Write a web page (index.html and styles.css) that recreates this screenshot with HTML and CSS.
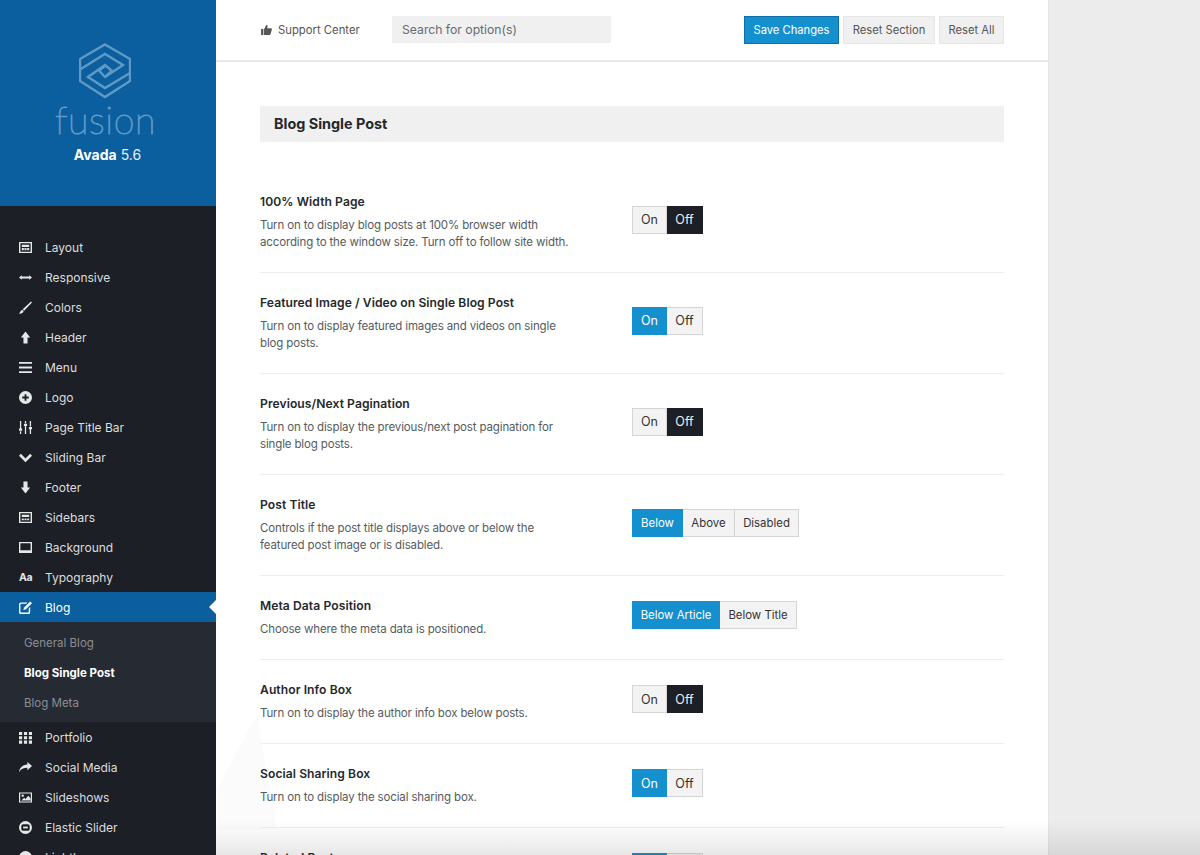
FILE: index.html
```html
<!DOCTYPE html>
<html lang="en">
<head>
<meta charset="utf-8">
<title>Avada Options</title>
<link rel="stylesheet" href="styles.css">
</head>
<body>
<div class="app">
  <aside class="sidebar">
    <div class="brand">
      <svg class="brand-mark" viewBox="0 0 52 56" width="52" height="56" fill="none" stroke="#5f9ac6" stroke-width="2.4">
        <path d="M26 1.500 L51 16 V38 L26 54 L1 38 V16 Z"/>
        <path d="M1 26.500 L26 11 L44 22 L26 34 L20 27.500 L26 23"/>
        <path d="M51 30 L26 45 L9 34 L26 22 L32.700 27.500 L26 34"/>
      </svg>
      <div class="brand-word">fusion</div>
      <div class="brand-version"><b>Avada</b> 5.6</div>
    </div>
    <nav class="menu">
      <a class="item"><svg class="ico" viewBox="0 0 14 14"><path fill-rule="evenodd" d="M0 1h14v12H0zM1.500 2.500v9h11v-9z"/><path d="M3 4h8v2.500H3zM3 7.500h2.200V10H3zM5.900 7.500h2.200V10H5.900zM8.800 7.500H11V10H8.800z"/></svg>Layout</a>
      <a class="item"><svg class="ico" viewBox="0 0 14 14"><path d="M0 7l3-2.500V6h8V4.500L14 7l-3 2.500V8H3v1.500z"/></svg>Responsive</a>
      <a class="item"><svg class="ico" viewBox="0 0 14 14"><path d="M13 .5l1 1L5.500 10.500l-1.500-1.500zM3.500 9.500l1.500 1.500C4.500 13 2 14 0 13.500c1.500-1 1.500-3.500 3.500-4z"/></svg>Colors</a>
      <a class="item"><svg class="ico" viewBox="0 0 14 14"><path d="M7 .5l5 6.500H9.200v6.500H4.800V7H2z"/></svg>Header</a>
      <a class="item"><svg class="ico" viewBox="0 0 14 14"><path d="M0 1h14v2H0zM0 6h14v2H0zM0 11h14v2H0z"/></svg>Menu</a>
      <a class="item"><svg class="ico" viewBox="0 0 14 14"><path fill-rule="evenodd" d="M7 0a7 7 0 100 14A7 7 0 007 0zM6 3.500h2V6h2.500v2H8v2.500H6V8H3.500V6H6z"/></svg>Logo</a>
      <a class="item"><svg class="ico" viewBox="0 0 14 14"><path d="M1 0h1.400v8H1zM1 11h1.400v3H1zM0 8h3.400v2.500H0zM6.300 0h1.400v2.500H6.300zM6.300 5.500h1.400V14H6.300zM5.300 3h3.400v2.500H5.300zM11.600 0H13v6h-1.400zM11.600 9H13v5h-1.400zM10.600 6.500H14V9h-3.400z"/></svg>Page Title Bar</a>
      <a class="item"><svg class="ico" viewBox="0 0 14 14"><path d="M2 3l5 5 5-5 2 2-7 7-7-7z"/></svg>Sliding Bar</a>
      <a class="item"><svg class="ico" viewBox="0 0 14 14"><path d="M4.800 .5h4.400V7H12l-5 6.500L2 7h2.800z"/></svg>Footer</a>
      <a class="item"><svg class="ico" viewBox="0 0 14 14"><path fill-rule="evenodd" d="M0 1h14v12H0zM1.500 2.500v9h11v-9z"/><path d="M3 4h8v2.500H3zM3 8h2.200v2H3zM5.900 8h2.200v2H5.900zM8.800 8H11v2H8.800z"/></svg>Sidebars</a>
      <a class="item"><svg class="ico" viewBox="0 0 14 14"><path fill-rule="evenodd" d="M0 1h14v12H0zM1.500 2.500v7.500h11V2.500z"/></svg>Background</a>
      <a class="item"><span class="ico-text">Aa</span>Typography</a>
      <a class="item active"><svg class="ico" viewBox="0 0 14 14"><path fill-rule="evenodd" d="M2 1.500h7L7.800 3H2.500a1 1 0 00-1 1v7.500a1 1 0 001 1h7a1 1 0 001-1V8L12 6.500V12a2 2 0 01-2 2H2a2 2 0 01-2-2V3.500a2 2 0 012-2z"/><path d="M12 .5l2 2-6.500 6.500-2.800.8.800-2.800z"/></svg>Blog</a>
      <div class="submenu">
        <a class="sub">General Blog</a>
        <a class="sub current">Blog Single Post</a>
        <a class="sub">Blog Meta</a>
      </div>
      <a class="item"><svg class="ico" viewBox="0 0 14 14"><path d="M0 1h3.400v3.400H0zM5.300 1h3.400v3.400H5.300zM10.600 1H14v3.400h-3.400zM0 5.600h3.400V9H0zM5.300 5.600h3.400V9H5.300zM10.600 5.600H14V9h-3.400zM0 10.200h3.400v3.400H0zM5.300 10.200h3.400v3.400H5.300zM10.600 10.200H14v3.400h-3.400z"/></svg>Portfolio</a>
      <a class="item"><svg class="ico" viewBox="0 0 14 14"><path d="M9 1l5 4.500L9 10V7.300C5 7.300 2 8.500 0 12 .5 7.500 3.500 4 9 3.700z"/></svg>Social Media</a>
      <a class="item"><svg class="ico" viewBox="0 0 14 14"><path fill-rule="evenodd" d="M0 1.500h14v11H0zM1.300 2.800v8.400h11.400V2.800z"/><circle cx="4" cy="5" r="1.300"/><path d="M2.500 10.200l3-3 1.500 1.500 3-3.500 2.500 3v2z"/></svg>Slideshows</a>
      <a class="item"><svg class="ico" viewBox="0 0 14 14"><path fill-rule="evenodd" d="M7 0a7 7 0 100 14A7 7 0 007 0zM4.500 3.500h5a2 2 0 012 2v3a2 2 0 01-2 2h-5a2 2 0 01-2-2v-3a2 2 0 012-2z"/><path d="M4.500 6h5v2h-5z"/></svg>Elastic Slider</a>
      <a class="item"><svg class="ico" viewBox="0 0 14 14"><circle cx="7" cy="7" r="7"/></svg>Lightbox</a>
    </nav>
  </aside>

  <main class="main">
    <header class="topbar">
      <a class="support"><svg class="thumb" viewBox="0 0 12 11"><path d="M0 4.500h2.500V11H0zM3.300 4.800L5.800 0c1.200 0 1.600 1 1.300 2L6.700 3.700H11c1 0 1.200.9.800 1.500L10.500 10c-.2.600-.6 1-1.300 1H3.300z"/></svg>Support Center</a>
      <div class="search">Search for option(s)</div>
      <div class="actions">
        <button class="btn primary w-save">Save Changes</button>
        <button class="btn w-section">Reset Section</button>
        <button class="btn w-all">Reset All</button>
      </div>
    </header>
    <section class="content">
      <h1 class="section-title">Blog Single Post</h1>
      <div class="option">
        <div class="info"><h2>100% Width Page</h2><p>Turn on to display blog posts at 100% browser width according to the window size. Turn off to follow site width.</p></div>
        <div class="seg"><span class="on-w">On</span><span class="dark off-w">Off</span></div>
      </div>
      <div class="option">
        <div class="info"><h2>Featured Image / Video on Single Blog Post</h2><p>Turn on to display featured images and videos on single blog posts.</p></div>
        <div class="seg"><span class="blue on-w">On</span><span class="off-w">Off</span></div>
      </div>
      <div class="option">
        <div class="info"><h2>Previous/Next Pagination</h2><p>Turn on to display the previous/next post pagination for single blog posts.</p></div>
        <div class="seg"><span class="on-w">On</span><span class="dark off-w">Off</span></div>
      </div>
      <div class="option">
        <div class="info"><h2>Post Title</h2><p>Controls if the post title displays above or below the featured post image or is disabled.</p></div>
        <div class="seg"><span class="blue w-below">Below</span><span class="w-above">Above</span><span class="w-disabled">Disabled</span></div>
      </div>
      <div class="option">
        <div class="info"><h2>Meta Data Position</h2><p>Choose where the meta data is positioned.</p></div>
        <div class="seg"><span class="blue w-article">Below Article</span><span class="w-title">Below Title</span></div>
      </div>
      <div class="option">
        <div class="info"><h2>Author Info Box</h2><p>Turn on to display the author info box below posts.</p></div>
        <div class="seg"><span class="on-w">On</span><span class="dark off-w">Off</span></div>
      </div>
      <div class="option">
        <div class="info"><h2>Social Sharing Box</h2><p>Turn on to display the social sharing box.</p></div>
        <div class="seg"><span class="blue on-w">On</span><span class="off-w">Off</span></div>
      </div>
      <div class="option">
        <div class="info"><h2>Related Posts</h2><p>Turn on to display related posts.</p></div>
        <div class="seg"><span class="blue on-w">On</span><span class="off-w">Off</span></div>
      </div>
    </section>
  </main>
  <div class="gutter"></div>
  <div class="fade"></div>
</div>
</body>
</html>
```
FILE: styles.css
```css
* { box-sizing: border-box; }
html, body { margin: 0; height: 855px; overflow: hidden; }
body { font-family: Inter, Roboto, "Liberation Sans", sans-serif; background: #ececec; }
.app { display: flex; height: 855px; overflow: hidden; position: relative; }

.sidebar { width: 216px; flex: none; background: #1c1f25; height: 855px; overflow: hidden; }
.brand { height: 206px; background: #0b5f9e; display: flex; flex-direction: column; align-items: center; padding-top: 43px; }
.brand-mark { display: block; margin-right: 6px; }
.brand-word { color: #5f9ac6; font-family: Lato, Roboto, sans-serif; font-weight: 100; -webkit-text-stroke: 1.1px #5f9ac6; font-size: 37.500px; line-height: 38px; margin: 2px 5px 0 0; letter-spacing: .6px; height: 41px; }
.brand-version { color: #e4edf4; font-size: 14px; line-height: 18px; margin: 4px 1px 0 0; }
.brand-version b { color: #fff; font-weight: 700; }

.menu { padding-top: 26px; }
.item { display: flex; align-items: center; height: 30px; padding-left: 19px; color: #dcddde; font-size: 12px; position: relative; }
.ico { width: 13px; height: 13px; fill: #e6e7e8; margin-right: 13px; flex: none; }
.ico-text { width: 13px; margin-right: 13px; font-size: 10.500px; font-weight: 700; color: #e6e7e8; flex: none; letter-spacing: -.3px; }
.item.active { background: #0b5f9e; color: #fff; }
.item.active .ico { fill: #fff; }
.item.active::after { content: ""; position: absolute; right: 0; top: 8px; border: 7px solid transparent; border-right-color: #fff; border-left-width: 0; }
.submenu { background: #262a33; padding: 5px 0; }
.sub { display: flex; align-items: center; height: 30px; padding: 1px 0 0 24px; color: #8b8e93; font-size: 11.500px; }
.sub.current { color: #fff; font-weight: 700; }

.main { width: 832px; flex: none; background: #fff; height: 855px; overflow: hidden; position: relative; }
.main::before { content: ""; position: absolute; left: 1px; top: 715px; width: 60px; height: 115px; background: #fbfbfb; clip-path: polygon(66% 0, 0 65%, 0 100%, 100% 100%); }
.topbar { height: 62px; border-bottom: 2px solid #eaeaea; display: flex; align-items: center; padding: 0 44px; }
.support { display: flex; align-items: center; width: 132px; flex: none; color: #555; font-size: 11.300px; padding-left: 1px; }
.thumb { width: 11px; height: 10px; fill: #555; margin-right: 6px; }
.search { width: 218.500px; height: 27px; margin-bottom: 1px; background: #f1f0f0; color: #666b70; font-size: 12.200px; line-height: 27px; padding-left: 10px; }
.actions { margin-left: auto; display: flex; gap: 4px; }
.btn { height: 28px; border: 1px solid #e6e6e6; background: #f1f0f0; color: #555; font: 11.200px Inter, Roboto, "Liberation Sans", sans-serif; padding: 0; }
.btn.primary { background: #1590ce; border-color: #0f6fa6; color: #fff; }
.w-save { width: 95px; }
.w-section { width: 92px; }
.w-all { width: 65px; }

.content { padding: 44px 44px 0; position: relative; }
.section-title { margin: 0 0 30px; height: 36px; line-height: 36px; background: #f1f0f0; color: #23282d; font-size: 14.400px; font-weight: 700; padding-left: 14px; }
.option { display: flex; align-items: center; border-bottom: 1px solid #eee; padding: 21px 0; }
.info { width: 372px; flex: none; padding-right: 57px; }
.info h2 { margin: 0 0 6px; font-size: 12.100px; line-height: 18px; font-weight: 600; color: #23282d; letter-spacing: .08px; }
.info p { margin: 0; font-size: 11.500px; line-height: 17px; color: #555b60; letter-spacing: -.14px; }
.seg { display: flex; height: 28px; margin-top: -5px; }
.seg span { display: flex; align-items: center; justify-content: center; height: 28px; background: #f3f3f3; border: 1px solid #d5d5d5; border-left-width: 0; color: #333; font-size: 11.400px; }
.seg span:first-child { border-left-width: 1px; }
.seg .blue { background: #1590ce; border-color: #1590ce; color: #fff; }
.seg .dark { background: #1c1f25; border-color: #1c1f25; color: #eee; }
.seg .on-w { width: 35px; font-size: 12.500px; }
.seg .off-w { width: 36px; font-size: 12.500px; }
.w-below { width: 51px; }
.w-above { width: 52px; }
.w-disabled { width: 64px; }
.w-article { width: 88px; }
.w-title { width: 77px; }

.gutter { flex: 1; background: #ececec; border-left: 1px solid #e4e4e4; }
.fade { position: absolute; left: 216px; right: 0; bottom: 0; height: 34px; background: linear-gradient(rgba(0,0,0,0), rgba(0,0,0,.09)); }
```
